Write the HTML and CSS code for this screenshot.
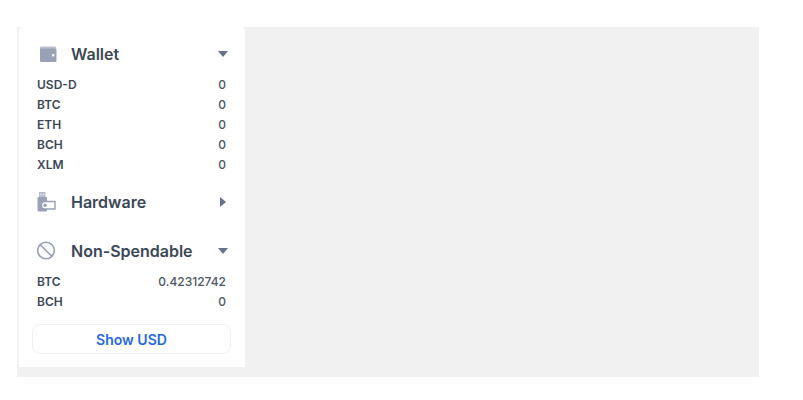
FILE: index.html
```html
<!DOCTYPE html>
<html lang="en">
<head>
  <meta charset="UTF-8" />
  <meta name="viewport" content="width=device-width, initial-scale=1.0"/>
  <title>Balances</title>
  <link rel="stylesheet" href="styles.css">
</head>
<body>
  <main class="content">
    <aside class="sidebar">
      <!-- Wallet -->
      <section class="group">
        <button class="group-title" type="button" aria-expanded="true" aria-controls="wallet">
          <svg class="icon" viewBox="0 0 20 20" aria-hidden="true">
            <path fill="#b9c0ce" d="M4 2.500h14a1 1 0 0 1 1 1V8H3V3.500a1 1 0 0 1 1-1z"/>
            <path fill="#98a1b5" d="M3 4.500h15a1.500 1.500 0 0 1 1.500 1.500v10.500A1.500 1.500 0 0 1 18 18H4.500A1.500 1.500 0 0 1 3 16.500z"/>
            <rect x="15" y="10" width="2.500" height="2.500" rx="0.800" fill="#fff"/>
          </svg>
          <span class="name">Wallet</span>
          <span class="arrow"></span>
        </button>
        <table class="balances" id="wallet">
          <tr><th scope="row">USD-D</th><td>0</td></tr>
          <tr><th scope="row">BTC</th><td>0</td></tr>
          <tr><th scope="row">ETH</th><td>0</td></tr>
          <tr><th scope="row">BCH</th><td>0</td></tr>
          <tr><th scope="row">XLM</th><td>0</td></tr>
        </table>
      </section>

      <!-- Hardware -->
      <section class="group collapsed">
        <button class="group-title" type="button" aria-expanded="false">
          <svg class="icon" viewBox="0 0 20 20" aria-hidden="true">
            <path fill="#b4bccb" d="M2 0h6.500v6H2z"/>
            <path fill="#dfe3ea" d="M3.200 1.500h1.500v2H3.200zM5.800 1.500h1.500v2H5.800z"/>
            <path fill="#98a1b5" d="M1.500 5H9a1 1 0 0 1 1 1v12.500a1 1 0 0 1-1 1H1.500a1 1 0 0 1-1-1V6a1 1 0 0 1 1-1z"/>
            <path fill="#fff" stroke="#98a1b5" stroke-width="1.400" d="M7.500 9.500H18v7.500H7.500a3 3 0 0 1-3-3v-1.500a3 3 0 0 1 3-3z"/>
            <circle cx="8" cy="13.200" r="1.700" fill="#98a1b5"/>
          </svg>
          <span class="name">Hardware</span>
          <span class="arrow right"></span>
        </button>
      </section>

      <!-- Non-Spendable -->
      <section class="group">
        <button class="group-title" type="button" aria-expanded="true" aria-controls="nonSpendable">
          <svg class="icon" viewBox="0 0 20 20" aria-hidden="true">
            <g fill="none" stroke="#98a1b5" stroke-width="1.600">
              <circle cx="9" cy="9.500" r="8.300"/>
              <path d="M3.200 3.700l11.600 11.600"/>
            </g>
          </svg>
          <span class="name">Non-Spendable</span>
          <span class="arrow"></span>
        </button>
        <table class="balances" id="nonSpendable">
          <tr><th scope="row">BTC</th><td>0.42312742</td></tr>
          <tr><th scope="row">BCH</th><td>0</td></tr>
        </table>
      </section>

      <button class="show-usd" type="button">Show USD</button>
    </aside>
  </main>
</body>
</html>
```

FILE: styles.css
```css
* { margin: 0; padding: 0; box-sizing: border-box; }
body { background: #fff; color: #3b4757; font-family: Inter, Arial, sans-serif; padding: 27px 44px 23px 17px; }
button { background: none; border: none; color: inherit; font-family: inherit; cursor: pointer; }
.content { background: #f1f1f1; padding: 0 0 10px 2px; }
.sidebar { width: 226px; padding: 12px 14px 13px 13px; background: #fff; border-radius: 4px 4px 0 0; }
.group { padding: 0 5px; margin-bottom: 12px; }
.group.collapsed { margin-bottom: 19px; }
.group-title { display: flex; align-items: center; width: 100%; height: 30px; text-align: left; }
.icon { width: 20px; height: 20px; }
.name { flex: 1; padding-left: 14px; font-size: 16px; font-weight: 600; line-height: 20px; white-space: nowrap; }
.arrow { border: 5px solid transparent; border-top: 6px solid #66728a; border-bottom: none; margin-right: -2px; }
.arrow.right { border: 5px solid transparent; border-left: 6px solid #66728a; border-right: none; margin-right: 0; }
.balances { width: 100%; margin-top: 6px; border-collapse: collapse; font-size: 12px; line-height: 20px; }
.balances th { text-align: left; font-weight: 600; }
.balances td { text-align: right; font-weight: 500; color: #4d5663; }
.show-usd { display: block; width: 100%; height: 30px; border: 1px solid #f0f0f2; border-radius: 8px; color: #2468e5; font-size: 14px; font-weight: 600; }
```
